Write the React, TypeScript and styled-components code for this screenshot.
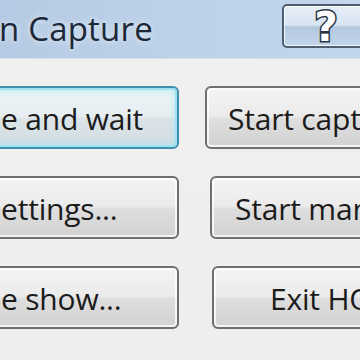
import React from "react";
import styled, { createGlobalStyle, css } from "styled-components";

const Global = createGlobalStyle`
  html, body {
    margin: 0;
    padding: 0;
    width: 360px;
    height: 360px;
    overflow: hidden;
    background: #f0f0f0;
  }
  #root { width: 360px; height: 360px; overflow: hidden; }
`;

const Window = styled.div`
  width: 360px;
  height: 360px;
  display: flex;
  flex-direction: column;
  overflow: hidden;
  font-family: "Open Sans", "Noto Sans", sans-serif;
  background: linear-gradient(#f8f8f8 0px, #f0f0f0 20px, #eeeeee 100%);
`;

const TitleBar = styled.div`
  height: 58px;
  flex: none;
  display: flex;
  align-items: flex-start;
  justify-content: space-between;
  background: linear-gradient(90deg, #b5cbe3 0%, #bdd2e9 50%, #c2d6ec 100%);
  border-bottom: 1px solid #d4e0ec;
`;

const Title = styled.div`
  margin-top: 7px;
  margin-left: -1px;
  font-size: 33px;
  line-height: 44px;
  color: #1c2838;
  letter-spacing: 0.2px;
  white-space: nowrap;
  text-shadow: 0 0 6px rgba(255, 255, 255, 0.7);
`;

const HelpButton = styled.div`
  margin-top: 4px;
  margin-right: -10px;
  width: 88px;
  height: 44px;
  flex: none;
  box-sizing: border-box;
  border: 2px solid #4e5e72;
  border-radius: 5px;
  background: linear-gradient(
    #e6eef7 0%,
    #d8e4f1 48%,
    #b3c8df 52%,
    #c3d5e9 100%
  );
  box-shadow: inset 0 0 0 1px rgba(255, 255, 255, 0.8);
  display: flex;
  align-items: center;
  justify-content: center;
  padding-top: 2px;
  font-family: "DejaVu Sans", sans-serif;
  font-weight: bold;
  font-size: 40px;
  line-height: 1;
  color: #ffffff;
  -webkit-text-stroke: 3px #2a3544;
  paint-order: stroke fill;
`;

const Panel = styled.div`
  display: grid;
  grid-template-columns: 199px 175px;
  grid-template-rows: 63px 63px 63px;
  column-gap: 26px;
  row-gap: 27px;
  padding-top: 27px;
  margin-left: -20px;
`;

const Button = styled.div<{ $indent: number; $shift?: number; $focused?: boolean }>`
  box-sizing: border-box;
  margin-left: ${(p) => p.$shift ?? 0}px;
  border: 2px solid #6f6f6f;
  border-radius: 6px;
  background: linear-gradient(
    #f4f4f4 0%,
    #ebebeb 48%,
    #dedede 52%,
    #d2d2d2 100%
  );
  box-shadow: inset 0 0 0 2px rgba(255, 255, 255, 0.75);
  display: flex;
  align-items: center;
  padding-left: ${(p) => p.$indent}px;
  padding-top: 2px;
  font-size: 30px;
  line-height: 1;
  letter-spacing: -0.2px;
  color: #1b1b1b;
  white-space: nowrap;
  overflow: hidden;
  ${(p) =>
    p.$focused &&
    css`
      border-color: #3f8fae;
      background: linear-gradient(
        #eef5f8 0%,
        #e6eef1 48%,
        #dbe3e7 52%,
        #d3dde2 100%
      );
      box-shadow: inset 0 0 0 2px #9fe3f2, inset 0 0 6px 3px rgba(160, 230, 245, 0.6);
    `}
`;

export default function App() {
  return (
    <>
      <Global />
      <Window>
        <TitleBar>
          <Title>n Capture</Title>
          <HelpButton>?</HelpButton>
        </TitleBar>
        <Panel>
          <Button $indent={19} $focused>
            e and wait
          </Button>
          <Button $indent={21}>Start capture</Button>
          <Button $indent={19}>ettings...</Button>
          <Button $indent={23} $shift={5}>
            Start manual
          </Button>
          <Button $indent={19}>e show...</Button>
          <Button $indent={56} $shift={7}>
            Exit HOT
          </Button>
        </Panel>
      </Window>
    </>
  );
}
